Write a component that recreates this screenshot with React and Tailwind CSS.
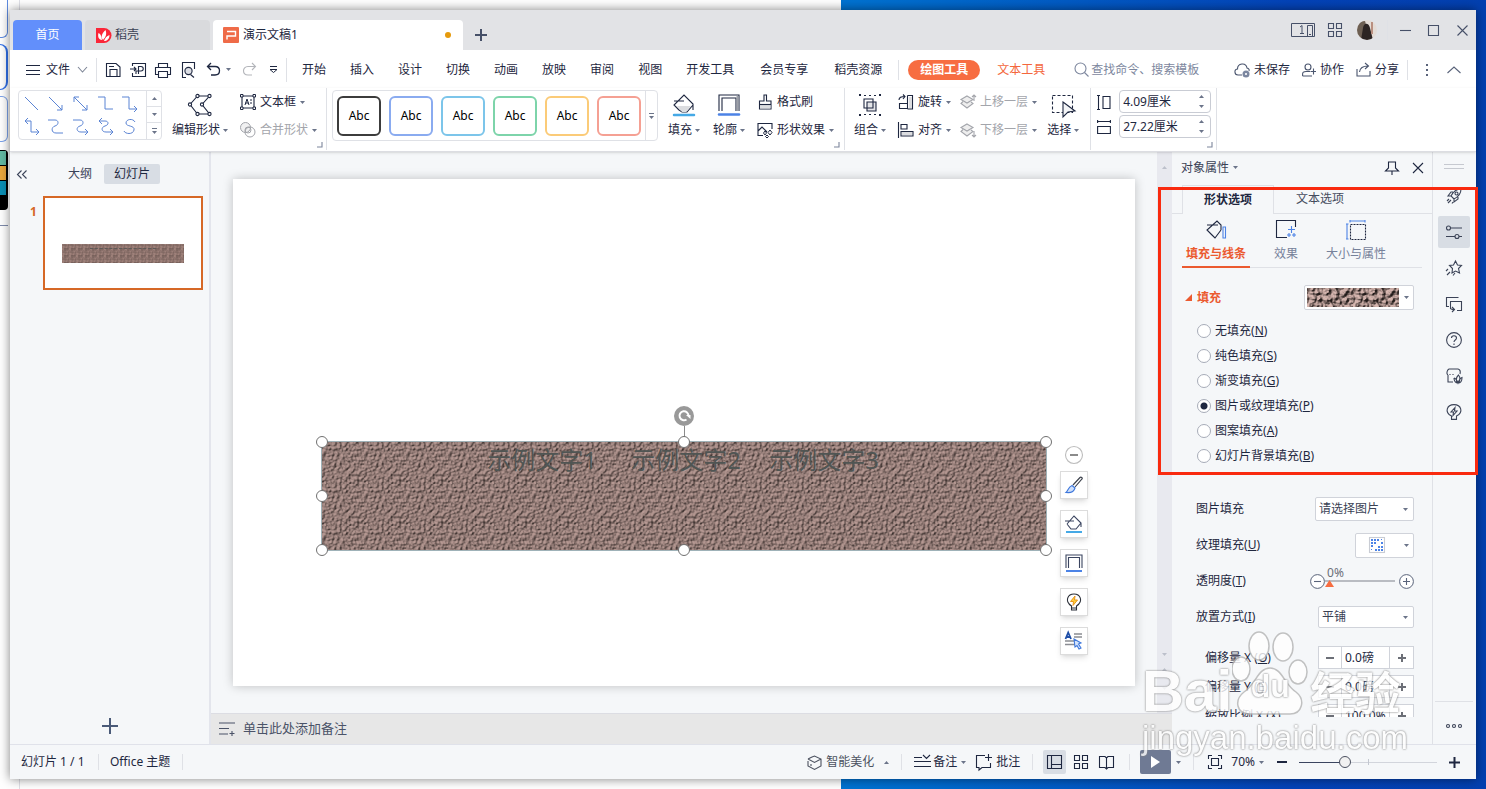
import { useState } from 'react';

const TABS = ['开始', '插入', '设计', '切换', '动画', '放映', '审阅', '视图'];
const LONG_TABS = ['开发工具', '会员专享', '稻壳资源'];

const STYLES = [
  { id: 'black', cls: 'border-[#3c3c3c]' },
  { id: 'blue', cls: 'border-[#8aabf0]' },
  { id: 'sky', cls: 'border-[#7cc5ea]' },
  { id: 'green', cls: 'border-[#7dd4aa]' },
  { id: 'yellow', cls: 'border-[#fbcb78]' },
  { id: 'red', cls: 'border-[#f5a093]' },
];

const FILLS = [
  { id: 'none', label: '无填充', keyName: 'N' },
  { id: 'solid', label: '纯色填充', keyName: 'S' },
  { id: 'gradient', label: '渐变填充', keyName: 'G' },
  { id: 'picture', label: '图片或纹理填充', keyName: 'P' },
  { id: 'pattern', label: '图案填充', keyName: 'A' },
  { id: 'slide', label: '幻灯片背景填充', keyName: 'B' },
];

const LINES = [
  'M1 1L14 14',
  'M1 1L14 14M14 9V14H9',
  'M1 1L14 14M14 9V14H9M1 6V1H6',
  'M0 1H7V13H15',
  'M0 1H7V13H15M12 10L15 13L12 16',
  'M1 2H7V13H14M12 10L15 13L12 16M4 -1L1 2L4 5',
  'M0 1H7C11 1 11 6 7 7C3 8 3 14 8 14H15',
  'M0 1H7C11 1 11 6 7 7C3 8 3 13 8 13H15M12 10L15 13L12 16',
  'M1 2H7C11 2 11 6 7 7C3 8 3 13 8 13H15M12 10L15 13L12 16M4 -1L1 2L4 5',
  'M13 3C11 -1 4 0 4 4C4 8 13 6 12 11C11 16 3 15 2 12',
];

function Icon({ w = 16, h = w, className = '', children, ...rest }) {
  return (
    <svg width={w} height={h} viewBox={`0 0 ${w} ${h}`} fill="none" stroke="currentColor" strokeWidth="1.1" aria-hidden="true" className={`shrink-0 overflow-visible ${className}`} {...rest}>
      {children}
    </svg>
  );
}

function Caret({ up = false, className = '' }) {
  return (
    <svg width="5" height="3" viewBox="0 0 5 3" aria-hidden="true" className={`shrink-0 text-[#6b7489] ${className}`}>
      <path d={up ? 'M0 3L2.5 0L5 3Z' : 'M0 0L2.5 3L5 0Z'} fill="currentColor" />
    </svg>
  );
}

function Divider({ className = '' }) {
  return <span className={`w-px shrink-0 bg-[#dfe1e6] ${className}`} />;
}

// Tiled stone texture, shared by the shape, its thumbnail and the fill preview
function Texture({ id, scale = 2, freq = 0.35, tile = 42, light = '#c9aba5' }) {
  return (
    <svg className="block h-full w-full" aria-hidden="true">
      <filter id={id} x="0" y="0" width="100%" height="100%" colorInterpolationFilters="sRGB">
        <feTurbulence type="fractalNoise" baseFrequency={freq} numOctaves="4" seed="11" stitchTiles="stitch" x="0" y="0" width={tile} height={tile} result="noise" />
        <feDiffuseLighting in="noise" surfaceScale={scale} diffuseConstant="1" lightingColor={light} x="0" y="0" width={tile} height={tile} result="lit">
          <feDistantLight azimuth="225" elevation="48" />
        </feDiffuseLighting>
        <feTile in="lit" />
      </filter>
      <rect width="100%" height="100%" fill="#93766f" />
      <rect width="100%" height="100%" opacity="0.75" filter={`url(#${id})`} />
    </svg>
  );
}

function BucketIcon() {
  return (
    <Icon w={22} h={22}>
      <path d="M6 16L1 11L11 1L20 10V16M6 16L9 18H14L20 11M1 7H11" />
      <path d="M4 12H18L13 18H9Z" fill="#dcdde0" stroke="none" />
      <path d="M1 21H21" stroke="#45a9e6" strokeWidth="2.5" strokeLinecap="round" />
    </Icon>
  );
}

function OutlineIcon() {
  return (
    <Icon w={22} h={22}>
      <path d="M1 17V1H21V17M4 17V4H18V17" />
      <path d="M19.5 2V17" stroke="#9da0a8" strokeWidth="2" />
      <path d="M1 20.5H21" stroke="#4c83e6" strokeWidth="2.5" strokeLinecap="round" />
    </Icon>
  );
}

function LayersIcon({ up }) {
  return (
    <Icon>
      <path d="M7 2L13 5.5L7 9L1 5.5ZM3 7.5L1 9.5L7 14L13 9.5L11 8" fill="#eee" />
      <path d={up ? 'M14 7V1M12 3L14 1L16 3' : 'M14 9V15M12 13L14 15L16 13'} />
    </Icon>
  );
}

function BigButton({ icon, label, className = '' }) {
  return (
    <button type="button" className={`mt-1 flex flex-col ${className}`}>
      <span className="flex h-[26px] items-center pl-[5px]">{icon}</span>
      <span className="flex h-6 items-center gap-[3px]">{label}<Caret /></span>
    </button>
  );
}

function SmallButton({ icon, label, caret = true, disabled = false }) {
  return (
    <button type="button" disabled={disabled} className="flex h-7 items-center gap-1 text-[#1e2740] disabled:text-[#a3a5ab]">
      {icon}
      <span>{label}</span>
      {caret && <Caret />}
    </button>
  );
}

function Launcher() {
  return (
    <button type="button" aria-label="更多设置" className="self-end pb-1">
      <Icon w={5} className="text-[#7d869c]"><path d="M5 0V5H0" /></Icon>
    </button>
  );
}

function SizeInput({ label, value, icon }) {
  return (
    <label className="flex items-center gap-2">
      {icon}
      <span className="flex h-[23px] w-[92px] items-center rounded-sm border border-[#c9ccd4] bg-white pr-1.5">
        <input aria-label={label} defaultValue={value} className="w-full min-w-0 bg-transparent pl-[3px] outline-none" />
        <span className="flex flex-col gap-[7px]"><Caret up /><Caret /></span>
      </span>
    </label>
  );
}

function TitleBar() {
  return (
    <header className="flex h-10 shrink-0 items-center bg-[#e2e3e6] pl-[3px] text-[#465068]">
      <div className="flex items-center gap-[3px] self-end">
        <button type="button" className="h-[30px] w-[69px] rounded-t-sm bg-[#628ffb] text-white">首页</button>
        <button type="button" className="flex h-[30px] w-[125px] items-center gap-1 rounded-t-sm bg-[#d9dadd] pl-[11px] text-[#3a4154]">
          <Icon w={15} stroke="none">
            <path d="M0 0H8A7.5 7.5 0 0 1 8 15H0Z" fill="#fb2638" />
            <path d="M7 12C4.500 9 6 5 9.500 2C11 6 10 9 7 12ZM6 12C2.500 12 1.500 8 2.500 5C5 6 5.500 9 6 12ZM8 13C9 10 10.500 8 13.500 7C13.500 11 11 13 8 13Z" fill="#fff" />
          </Icon>
          稻壳
        </button>
        <button type="button" className="flex h-[30px] w-[250px] items-center gap-1 rounded-t-sm bg-white pl-2.5 pr-3 text-[#1e2740]">
          <Icon stroke="none">
            <rect width="16" height="16" rx="1" fill="#ef6b48" />
            <path d="M4 4.5H12.5V9H4V12.5" stroke="#fff" strokeWidth="1.4" />
          </Icon>
          演示文稿1
          <span className="ml-auto size-1.5 rounded-full bg-[#e69a0c]" />
        </button>
      </div>
      <button type="button" aria-label="新建标签" className="mt-2.5 ml-3">
        <Icon w={12} strokeWidth="2"><path d="M6 0V12M0 6H12" /></Icon>
      </button>
      <div className="ml-auto flex items-center">
        <Icon w={24} h={15} strokeWidth="1"><path d="M.5 .5H23.5V13.5H.5ZM16.5 2.5H21.5V13M16.5 2.5V13.5M9 4L11 2.5V10.5M9 10.5H13M18 11.5H20" /></Icon>
        <Icon w={14} className="ml-[13px]"><path d="M.5 .5H5.500V5.500H.5ZM8.500 .5H13.500V5.500H8.500ZM.5 8.500H5.500V13.500H.5ZM8.500 8.500H13.500V13.500H8.500Z" /></Icon>
        <svg width="20" height="20" viewBox="0 0 20 20" className="ml-[15px] rounded-full" aria-hidden="true">
          <rect width="20" height="20" fill="#e4dcd6" />
          <path d="M0 2L8 1L10 8L5 19H0Z" fill="#6d5f52" />
          <path d="M6 8C7 2 12 3 13 8L16 20H4Z" fill="#2c2422" />
          <path d="M14 2H16V14H14Z" fill="#b98f80" />
        </svg>
        <Divider className="ml-2.5 h-5 bg-[#c4c6cc]" />
        <button type="button" aria-label="最小化" className="ml-3"><Icon w={11}><path d="M0 5.5H11" /></Icon></button>
        <button type="button" aria-label="最大化" className="ml-[17px]"><Icon w={11}><path d="M.5 .5H10.5V10.5H.5Z" /></Icon></button>
        <button type="button" aria-label="关闭" className="mr-2 ml-[18px]"><Icon w={11}><path d="M.5 .5L10.5 10.5M10.5 .5L.5 10.5" /></Icon></button>
      </div>
    </header>
  );
}

function MenuBar() {
  return (
    <nav className="flex h-[38px] shrink-0 items-center bg-white pt-px pl-4 text-[#1e2740]">
      <button type="button" className="flex items-center">
        <Icon w={14} h={10} strokeWidth="1"><path d="M0 .5H14M0 5.5H14M0 9.5H14" /></Icon>
        <span className="ml-1.5">文件</span>
        <Icon w={9} h={5} className="ml-2 text-[#7d8596]"><path d="M0 0L4.5 5L9 0" /></Icon>
      </button>
      <Divider className="ml-[9px] h-6" />
      <div className="ml-2 flex items-center gap-[9px]">
        <button type="button" aria-label="保存"><Icon><path d="M1.5 1.5H11L15 5V14.5H1.500ZM5 14.5V7.5H12V14.5M4 4.5H9" /></Icon></button>
        <button type="button" aria-label="输出为PDF"><Icon><path d="M2.5 4V1.5H15.5V14.5H2.5V11M0 7H6M4 5L6 7L4 9M8.500 12V4.500H11C14 4.500 14 9 11 9H6V12" /></Icon></button>
        <button type="button" aria-label="打印"><Icon><path d="M3.5 5.500V1.5H12.5V5.500M3.5 12.5H.5V5.5H15.5V12.5H12.5M3.5 9.5H12.5V15.5H3.5Z" /></Icon></button>
        <button type="button" aria-label="打印预览"><Icon><path d="M6 15.5H2.5V.5H14.500V7M10.5 12.5L14 15.5" /><circle cx="8.5" cy="9" r="3.6" fill="#dcdee4" /></Icon></button>
      </div>
      <button type="button" aria-label="撤销" className="ml-2.5"><Icon strokeWidth="1.300"><path d="M5 1L1.5 4.5L5 8M2 4.5H9C15 4.5 15 13 9 13H5" /></Icon></button>
      <Caret className="ml-1" />
      <button type="button" aria-label="恢复" className="ml-2.5 text-[#b3b5ba]"><Icon><path d="M11 1L14.5 4.5L11 8M14 4.5H7C1 4.5 1 13 7 13H11" /></Icon></button>
      <button type="button" aria-label="自定义工具栏" className="ml-3"><Icon w={9} h={7} strokeWidth="1"><path d="M1 .5H8M1 3.500H8L4.500 6.500Z" /></Icon></button>
      <Divider className="ml-2 h-6" />
      <div className="ml-[15px] flex gap-6">
        {TABS.map((t) => <button type="button" key={t}>{t}</button>)}
        <div className="flex gap-[26px]">
          {LONG_TABS.map((t) => <button type="button" key={t}>{t}</button>)}
        </div>
      </div>
      <Divider className="ml-4 h-5" />
      <button type="button" className="ml-[9px] h-5 rounded-full bg-[#f76d41] px-3 font-bold text-white">绘图工具</button>
      <button type="button" className="ml-[17px] text-[#f4673c]">文本工具</button>
      <label className="ml-[29px] flex items-center gap-0.5 text-[#7d879e]">
        <Icon w={15}><circle cx="6.5" cy="6.5" r="5.5" /><path d="M10.5 10.5L14.5 14.5" /></Icon>
        <input aria-label="查找" placeholder="查找命令、搜索模板" className="w-[116px] outline-none placeholder:text-[#7d879e]" />
      </label>
      <div className="ml-auto flex items-center">
        <button type="button" className="flex items-center gap-1">
          <Icon className="text-[#4a556e]"><path d="M8 13H4C0 13 0 7 3.5 7C3.5 1 12 0 13 6C15 6.5 15.5 8 15 9" /><circle cx="12" cy="12" r="3.500" fill="#7c87a0" stroke="none" /><path d="M11 11L13 13M13 11L11 13" stroke="#fff" strokeWidth=".8" /></Icon>
          未保存
        </button>
        <button type="button" className="ml-3 flex items-center gap-1">
          <Icon w={14} className="text-[#4a556e]"><circle cx="6" cy="4" r="3" /><path d="M.6 13V11C.6 9 2 8.5 4 8.5H8M.6 13H10M11.5 5.5V11.5M8.5 8.5H14" /></Icon>
          协作
        </button>
        <button type="button" className="ml-3 flex items-center gap-1">
          <Icon w={15} className="text-[#4a556e]"><path d="M1 7V14H14V9M3.5 10C4 6 7 4 12 4M9 1L12.5 4L9 7" /></Icon>
          分享
        </button>
        <Divider className="ml-2 h-5" />
        <button type="button" aria-label="更多" className="ml-[18px]"><Icon w={3} h={12} stroke="none"><path d="M0 0H2V2H0ZM0 5H2V7H0ZM0 10H2V12H0Z" fill="#59637a" /></Icon></button>
        <button type="button" aria-label="收起功能区" className="mr-[15px] ml-[18px]"><Icon w={14} h={7} className="text-[#59637a]"><path d="M.5 7L7 1L13.5 7" /></Icon></button>
      </div>
    </nav>
  );
}

function Ribbon() {
  return (
    <section className="z-10 flex h-16 shrink-0 border-b border-[#dcdde2] bg-white pl-2 text-[#1e2740] shadow-sm">
      <div className="mt-0.5 flex h-[50px] w-36 shrink-0 rounded-sm border border-[#dfe1e6]">
        <div className="grid flex-1 grid-cols-5 place-items-center py-px pr-1">
          {LINES.map((d) => (
            <button type="button" key={d} aria-label="线条">
              <Icon w={15} className="text-[#5b84d4]" strokeWidth="1"><path d={d} /></Icon>
            </button>
          ))}
        </div>
        <div className="grid w-[15px] grid-rows-3 place-items-center divide-y divide-[#dfe1e6] border-l border-[#dfe1e6]">
          <button type="button" aria-label="上一行" className="flex h-full w-full items-center justify-center"><Caret up /></button>
          <button type="button" aria-label="下一行" className="flex h-full w-full items-center justify-center"><Caret /></button>
          <button type="button" aria-label="其他形状" className="flex h-full w-full flex-col items-center justify-center gap-0.5"><span className="h-px w-[5px] bg-[#6b7489]" /><Caret /></button>
        </div>
      </div>
      <BigButton
        className="ml-2.5"
        label="编辑形状"
        icon={(
          <span className="pl-[11px]">
            <Icon w={24} h={22}>
              <path d="M9.5 2H21.5L14 10.5L21.5 20H9.5L2 10.5Z" />
              <g fill="#fff"><circle cx="9.5" cy="2" r="1.6" /><circle cx="21.5" cy="2" r="1.6" /><circle cx="14" cy="10.5" r="1.6" /><circle cx="21.5" cy="20" r="1.6" /><circle cx="9.5" cy="20" r="1.6" /><circle cx="2" cy="10.5" r="1.6" /></g>
            </Icon>
          </span>
        )}
      />
      <div className="ml-3 flex flex-col">
        <SmallButton label="文本框" icon={<Icon><path d="M2 2H14V14H2Z" /><path d="M5 11L7 5L9 11M5.5 9H8.5M10 6H12M10 9H12" strokeWidth="1" /><g fill="#fff"><path d="M.5 .5H3V3H.5ZM13 .5H15.5V3H13ZM.5 13H3V15.5H.5ZM13 13H15.5V15.5H13Z" strokeWidth="1" /></g></Icon>} />
        <SmallButton disabled label="合并形状" icon={<Icon strokeWidth="1"><circle cx="5.5" cy="5.5" r="5" fill="#f1f1f2" /><circle cx="10" cy="10" r="5" /><circle cx="8" cy="8" r="3" /></Icon>} />
      </div>
      <Launcher />
      <Divider className="ml-1 h-[62px]" />
      <div className="mt-0.5 ml-[5px] flex h-[51px] shrink-0 items-center rounded-sm border border-[#dfe1e6]">
        <div className="flex gap-2 px-1">
          {STYLES.map((s) => (
            <button type="button" key={s.id} className={`h-10 w-11 rounded-md border-2 text-black ${s.cls}`}>Abc</button>
          ))}
        </div>
        <button type="button" aria-label="更多样式" className="flex h-full w-3 flex-col items-center justify-center gap-0.5 border-l border-[#dfe1e6]"><span className="h-px w-[5px] bg-[#6b7489]" /><Caret /></button>
      </div>
      <BigButton className="ml-2.5" label="填充" icon={<BucketIcon />} />
      <BigButton className="ml-[13px]" label="轮廓" icon={<OutlineIcon />} />
      <div className="ml-3 flex flex-col">
        <SmallButton caret={false} label="格式刷" icon={<Icon><path d="M7 1H9.5V7H14V15H2.5V7H7Z" /><path d="M3 11H13.5V14.5H3Z" fill="#dcdde0" stroke="none" /><path d="M2.5 10.5H14" /></Icon>} />
        <SmallButton label="形状效果" icon={<Icon><path d="M6 13.5H1V1.5H15V7M1 9L5 5L10 10" /><path d="M8 9L9.500 11L8 13L6.500 11ZM13 8L15 10.5L13 13L11 10.5ZM10 13L11.500 14.5L10 16L8.500 14.5Z" strokeWidth="1" /></Icon>} />
      </div>
      <Launcher />
      <Divider className="ml-[5px] h-[62px]" />
      <BigButton
        className="ml-[9px]"
        label="组合"
        icon={(
          <Icon w={22} h={22}>
            <path d="M8 8H17V17H8Z" fill="#e4e5e8" />
            <path d="M5 5H14V14H5Z" />
            <path d="M5 1.500H7M10 1.500H12M15 1.500H17M5 20.500H7M10 20.500H12M15 20.500H17" strokeWidth="1" />
            <path d="M0 0H2V2H0ZM20 0H22V2H20ZM0 20H2V22H0ZM20 20H22V22H20Z" fill="currentColor" stroke="none" />
          </Icon>
        )}
      />
      <div className="ml-3 flex flex-col">
        <SmallButton label="旋转" icon={<Icon><path d="M9.5 1.5H14.5V15H9.500M9.500 1.500V15M9.5 9.5H1.5V14.500H9.5M1 6C1 3 3 2.5 7 2.5M5 .5L7 2.5L5 5" /><path d="M11 3H14V14H11Z" fill="#dcdde0" stroke="none" /></Icon>} />
        <SmallButton label="对齐" icon={<Icon><path d="M.5 0V16M3 2.5H9V7H3ZM3 9.5H15V14H3Z" /><path d="M4 10H14V13H4Z" fill="#dcdde0" stroke="none" /></Icon>} />
      </div>
      <div className="ml-[9px] flex flex-col">
        <SmallButton disabled label="上移一层" icon={<LayersIcon up />} />
        <SmallButton disabled label="下移一层" icon={<LayersIcon />} />
      </div>
      <BigButton
        className="ml-2.5"
        label="选择"
        icon={<Icon w={24} h={22}><path d="M.5 1.5H20.500V18.500H.5Z" strokeDasharray="3 2" /><path d="M11 8L23 17L16 18L11 23Z" fill="#f3f4f6" /></Icon>}
      />
      <Divider className="ml-[11px] h-[62px]" />
      <div className="mt-0.5 ml-1.5 flex flex-col gap-0.5">
        <SizeInput label="高度" value="4.09厘米" icon={<Icon w={14}><path d="M1.5 1V14M0 .5H3M0 14.500H3M6 1.5H13V13.5H6Z" /></Icon>} />
        <SizeInput label="宽度" value="27.22厘米" icon={<Icon w={14}><path d="M0 1.500H14M.6 0V3M13.4 0V3M.6 6.5H13.4V13.5H.6Z" /></Icon>} />
      </div>
      <div className="-ml-1 flex"><Launcher /></div>
      <Divider className="ml-1 h-[62px]" />
    </section>
  );
}

function SlideList() {
  return (
    <aside className="flex w-[201px] shrink-0 flex-col border-r-2 border-[#e3e5ec]">
      <div className="mt-3 flex h-5 items-center pl-[7px] text-[#3a4358]">
        <button type="button" aria-label="收起"><Icon w={10} h={9}><path d="M4.5 .5L.5 4.5L4.5 8.5M9.5 .5L5.5 4.5L9.5 8.5" /></Icon></button>
        <button type="button" className="ml-[29px] px-3">大纲</button>
        <button type="button" className="h-5 w-14 rounded-xs bg-[#d8dde4] text-[#1e2740]">幻灯片</button>
      </div>
      <div className="mt-3 flex pl-5">
        <span className="w-[13px] pt-2 font-bold text-[#d66826]">1</span>
        <button type="button" aria-label="幻灯片 1" className="flex h-[94px] w-40 border-2 border-[#d66826] bg-white pt-[46px] pl-[17px]">
          <span className="relative h-[19px] w-[122px] overflow-hidden">
            <Texture id="tex-thumb" freq={0.5} scale={1} tile={7} light="#b9978f" />
            <span className="absolute inset-x-7 top-1 h-px border-t border-dashed border-[#5d5a58]" />
          </span>
        </button>
      </div>
      <button type="button" aria-label="新建幻灯片" className="mt-auto mb-2.5 self-center text-[#4a5a78]">
        <Icon w={16} strokeWidth="2"><path d="M8 0V16M0 8H16" /></Icon>
      </button>
    </aside>
  );
}

const HANDLES = [
  'left-0 top-0', 'left-1/2 top-0', 'left-full top-0',
  'left-0 top-1/2', 'left-full top-1/2',
  'left-0 top-full', 'left-1/2 top-full', 'left-full top-full',
];

const FLOAT_TOOLS = [
  { id: '格式刷', icon: <Icon w={18}><path d="M8 9L15 1.5C16 .5 18 2 17 3L10 11" stroke="#3a3f4a" /><path d="M7 9.5L10 12C9 16 5 17 1 16.5C3 15 3 11 7 9.5Z" fill="#cfe0fb" stroke="#3f78dc" /></Icon> },
  { id: '填充', icon: <Icon w={18}><path d="M2 9L9 1L16 8V12M2 9L6 14H11L16 8M0 6H9" /><path d="M1 17H17" stroke="#45a9e6" strokeWidth="2" /></Icon> },
  { id: '轮廓', icon: <Icon w={18}><path d="M1 14V1H17V14M3.5 14V3.5H14.5V14" /><path d="M1 17H17" stroke="#4c83e6" strokeWidth="2" /></Icon> },
  { id: '智能', icon: <Icon w={18}><path d="M6.5 13C-1 8 3 1 9 1S19 8 11.5 13V17H6.5ZM6.5 15H11.5" stroke="#2b2f38" /><path d="M10 3L5.5 8.5H8.5L8 12.5L12.5 7H9.5Z" fill="#ffd23c" stroke="#e8951c" strokeWidth="1" /></Icon> },
  { id: '文本', icon: <Icon w={18}><path d="M9 2H17M9 5H17M0 9H11M0 12.5H10" stroke="#8a8d93" strokeWidth="1.5" /><path d="M.5 7L3.2 .5L6 7M1.5 5H5" stroke="#1f4fa8" strokeWidth="1.8" /><path d="M9 7L16 11L13.5 12L16 16L14 17L12 13.5L10 15Z" fill="#d6e5fc" stroke="#3f78dc" /></Icon> },
];

function Canvas() {
  return (
    <main className="mx-[22px] my-[27px] flex-1 bg-white shadow-[0_0_10px_rgba(0,0,0,0.22)]">
      <div className="relative h-full">
        <div className="absolute top-[262px] left-[88px] h-[110px] w-[726px] border border-[#9fb2b8]">
          <Texture id="tex-shape" />
          <p className="absolute inset-x-0 top-0 flex h-9 items-center pl-[165px] text-2xl text-[#505553]">
            <span className="w-36">示例文字1</span>
            <span className="w-[138px]">示例文字2</span>
            <span>示例文字3</span>
          </p>
          <span className="absolute -top-4 left-1/2 h-4 w-px bg-[#8b8b8b]" />
          <span className="absolute -top-9 left-1/2 flex size-5 -translate-x-1/2 items-center justify-center rounded-full bg-[#999]">
            <Icon w={12} className="text-white" strokeWidth="2"><path d="M8.5 9.5A4.5 4.5 0 1 1 10.5 6" /><path d="M8 5H12.5V9Z" fill="#fff" stroke="none" /></Icon>
          </span>
          {HANDLES.map((pos) => (
            <span key={pos} className={`absolute size-3 -translate-1/2 rounded-full border border-[#707070] bg-white ${pos}`} />
          ))}
        </div>
        <div className="absolute top-[267px] left-[827px] flex w-7 flex-col items-center gap-[11px]">
          <button type="button" aria-label="收起工具" className="-mb-1 text-[#8b8b8b]"><Icon w={18}><circle cx="9" cy="9" r="8.5" stroke="#bdbdbd" /><path d="M5 9H13" strokeWidth="2" /></Icon></button>
          {FLOAT_TOOLS.map((t) => (
            <button type="button" key={t.id} aria-label={t.id} className="flex size-7 items-center justify-center border border-[#dcdcdc] bg-white text-[#3b4560] shadow-md">
              {t.icon}
            </button>
          ))}
        </div>
      </div>
    </main>
  );
}

function Workspace() {
  return (
    <div className="flex min-w-0 flex-1 flex-col">
      <div className="flex min-h-0 flex-1">
        <Canvas />
        <div className="flex w-[15px] flex-col items-center bg-[#e8e9ef] pt-3.5 pb-[7px]">
          <Caret up className="text-[#bcc0cb]" />
          <Caret className="mt-auto mb-3 text-[#bcc0cb]" />
          <Caret up className="mb-4 text-[#bcc0cb]" />
          <Caret className="mb-4 text-[#bcc0cb]" />
        </div>
      </div>
      <label className="flex h-[31px] shrink-0 items-center gap-2 border-t border-[#dcdde3] bg-[#e7e7e7] pl-2 text-[13px] text-[#4b5368]">
        <Icon w={16} h={14}><path d="M0 1H16M0 6.5H10M0 12H9M13 9V14M10.5 11.5H15.5" /></Icon>
        <input aria-label="备注" placeholder="单击此处添加备注" className="flex-1 outline-none placeholder:text-[#4b5368]" />
      </label>
    </div>
  );
}

function Row({ id, label, keyName, children }) {
  return (
    <div className="flex h-9 items-center justify-between pr-[18px] pl-6">
      <label htmlFor={id}>{label}{keyName && <>(<u>{keyName}</u>)</>}</label>
      {children}
    </div>
  );
}

function Select({ id, className, options }) {
  return (
    <span className="relative flex items-center">
      <select id={id} className={`appearance-none rounded-xs border border-[#d0d3da] bg-white pl-[3px] text-[#3a4154] ${className}`}>
        {options.map((o) => <option key={o}>{o}</option>)}
      </select>
      <Caret className="pointer-events-none absolute right-1.5" />
    </span>
  );
}

function Stepper({ id, label, keyName, value }) {
  return (
    <div className="flex h-[29px] shrink-0 items-center justify-between pr-[18px] pl-[33px]">
      <label htmlFor={id}>{label} (<u>{keyName}</u>)</label>
      <span className="flex h-[23px] w-24 divide-x divide-[#d0d3da] border border-[#d0d3da] bg-white text-[#6c6f77]">
        <button type="button" aria-label="减少" className="flex w-[23px] items-center justify-center"><Icon w={8} strokeWidth="2"><path d="M0 4H8" /></Icon></button>
        <input id={id} defaultValue={value} className="w-0 flex-1 pl-[3px] text-[#1e2740] outline-none" />
        <button type="button" aria-label="增加" className="flex w-[23px] items-center justify-center"><Icon w={8} strokeWidth="2"><path d="M0 4H8M4 0V8" /></Icon></button>
      </span>
    </div>
  );
}

function Properties() {
  const [fill, setFill] = useState('picture');
  const [opacity, setOpacity] = useState(0);

  return (
    <aside className="flex w-[260px] shrink-0 flex-col overflow-hidden pb-[27px] text-[#1e2740]">
      <div className="flex min-h-0 flex-1 flex-col overflow-hidden">
        <div className="flex h-[33px] shrink-0 items-center pr-[9px] pb-0.5 pl-[9px]">
          <button type="button" className="flex items-center gap-1 text-[#3a4154]">对象属性<Caret /></button>
          <button type="button" aria-label="固定" className="ml-auto"><Icon w={14}><path d="M3.5 1H10.5V7L13.5 10H.5L3.5 7ZM7 10V14" /></Icon></button>
          <button type="button" aria-label="关闭面板" className="ml-3.5"><Icon w={10}><path d="M0 0L10 10M10 0L0 10" /></Icon></button>
        </div>
        <div className="flex h-[29px] shrink-0 text-[#454c5e]">
          <span className="w-2.5 border-b border-[#dfe1e6]" />
          <button type="button" className="w-[92px] border-x border-t border-[#dfe1e6] font-bold text-[#1e2740]">形状选项</button>
          <button type="button" className="flex-1 border-b border-[#dfe1e6] pl-[22px] text-left">文本选项</button>
        </div>
        <div className="mx-2.5 flex h-[54px] shrink-0 border-b border-[#dfe1e6] text-[#76819a]">
          <button type="button" className="-mb-px flex w-[68px] flex-col items-center border-b-2 border-[#eb5a30] font-bold text-[#eb5a30]">
            <span className="flex h-8 items-center text-[#1e2740]"><Icon w={20}><path d="M6 15L1 10L11 1L15 5V10M6 15L9 18L15 10M1 5H12" /><path d="M17 7H19.5V18H17Z" stroke="#4c83e6" /></Icon></span>
            填充与线条
          </button>
          <button type="button" className="flex w-[72px] flex-col items-center">
            <span className="flex h-8 items-center"><Icon w={20}><path d="M11 17.5H.5V.5H19.5V7" stroke="#1e2740" /><path d="M15.500 6V13M12 9.5H19M13 13V17M11 15H15M18 13V17M16 15H20" stroke="#4c83e6" /></Icon></span>
            效果
          </button>
          <button type="button" className="flex w-[68px] flex-col items-center">
            <span className="flex h-8 items-center"><Icon w={20}><path d="M4.5 4.5H19.5V19.5H4.5Z" stroke="#1e2740" strokeDasharray="2 1" /><path d="M4 1H19M4 0V2.5M19 0V2.5M1 4V19M0 4H2.5M0 19H2.5" stroke="#4c83e6" /></Icon></span>
            <span className="whitespace-nowrap">大小与属性</span>
          </button>
        </div>
        <div className="mt-[17px] flex h-[25px] shrink-0 items-center pr-[18px] pl-[13px]">
          <Icon w={7} className="text-[#eb5a30]" stroke="none"><path d="M7 0V7H0Z" fill="currentColor" /></Icon>
          <h3 className="ml-[5px] font-bold text-[#eb5a30]">填充</h3>
          <button type="button" aria-label="填充预览" className="ml-auto flex h-[25px] w-[110px] items-center justify-between rounded-xs border border-[#d0d3da] bg-white pr-1 pl-0.5">
            <span className="h-[19px] w-[92px]"><Texture id="tex-preview" freq={0.22} scale={5} tile={46} light="#f0cfc8" /></span>
            <Caret />
          </button>
        </div>
        <fieldset aria-label="填充" className="mt-2 shrink-0 pl-[25px]">
          {FILLS.map((f) => (
            <label key={f.id} className="flex h-[25px] items-center gap-1">
              <input
                type="radio"
                name="fill"
                checked={fill === f.id}
                onChange={() => setFill(f.id)}
                className="size-3.5 appearance-none rounded-full border border-[#a7acb8] bg-white checked:bg-[radial-gradient(#1e2740_3px,#ffffff_4px)]"
              />
              <span>{f.label}(<u>{f.keyName}</u>)</span>
            </label>
          ))}
        </fieldset>
        <div className="mt-[23px] shrink-0">
          <Row id="pic" label="图片填充"><Select id="pic" className="h-6 w-[99px]" options={['请选择图片', '本地文件']} /></Row>
          <Row id="tex" label="纹理填充" keyName="U">
            <button type="button" id="tex" className="flex h-[25px] w-[59px] items-center justify-between rounded-xs border border-[#d0d3da] bg-white pr-1 pl-[13px]">
              <Icon w={16} stroke="none">
                <rect x=".5" y=".5" width="15" height="15" stroke="#c9ccd4" />
                <path d="M2 2H4V4H2ZM5 2H7V4H5ZM8 2H10V4H8ZM12 2H13V3H12ZM2 5H4V7H2ZM5 5H7V7H5ZM2 8H4V10H2ZM12 5H14V7H12ZM9 9H11V11H9ZM12 9H14V11H12ZM2 12H3V13H2ZM6 12H8V14H6ZM9 12H11V14H9ZM12 12H14V14H12Z" fill="#4c83e6" />
              </Icon>
              <Caret />
            </button>
          </Row>
          <Row id="alpha" label="透明度" keyName="T">
            <span className="relative flex items-center text-[#59637a]">
              <button type="button" aria-label="降低" onClick={() => setOpacity(Math.max(0, opacity - 1))}><Icon w={15}><circle cx="7.5" cy="7.5" r="6.9" fill="#fff" strokeWidth="1" /><path d="M4 7.5H11" /></Icon></button>
              <input
                id="alpha"
                type="range"
                value={opacity}
                onChange={(e) => setOpacity(Number(e.target.value))}
                className="mr-1 h-4 w-[70px] appearance-none bg-[linear-gradient(#b9bcc2,#b9bcc2)] bg-[length:100%_2px] bg-center bg-no-repeat [&::-webkit-slider-thumb]:mt-[5px] [&::-webkit-slider-thumb]:h-[7px] [&::-webkit-slider-thumb]:w-[9px] [&::-webkit-slider-thumb]:appearance-none [&::-webkit-slider-thumb]:bg-[#f76d41] [&::-webkit-slider-thumb]:[clip-path:polygon(50%_0,100%_100%,0_100%)]"
              />
              <button type="button" aria-label="提高" onClick={() => setOpacity(Math.min(100, opacity + 1))}><Icon w={15}><circle cx="7.5" cy="7.5" r="6.9" fill="#fff" strokeWidth="1" /><path d="M4 7.5H11M7.5 4V11" /></Icon></button>
              <output htmlFor="alpha" className="absolute -top-2 left-[17px] text-[#6b6f78]">{opacity}%</output>
            </span>
          </Row>
          <Row id="place" label="放置方式" keyName="I"><Select id="place" className="h-[22px] w-24" options={['平铺', '拉伸']} /></Row>
        </div>
        <div className="mt-2 flex flex-col">
          <Stepper id="ox" label="偏移量 X" keyName="O" value="0.0磅" />
          <Stepper id="oy" label="偏移量 Y" keyName="E" value="0.0磅" />
          <Stepper id="sx" label="缩放比例 X" keyName="X" value="100.0%" />
        </div>
      </div>
    </aside>
  );
}

const SIDE = [
  { id: '快捷', d: 'M5 8C7 4 10 1 15 1C15 6 12 9 8 11ZM5 8H2L5 4H7M8 11V14L12 11V9M3 11L1 13M5 12L2 15M7 14L6 15.5M9 5.500A1.500 1.500 0 1 1 12 5.500A1.500 1.500 0 1 1 9 5.500' },
  { id: '属性', d: 'M5 4H16M2.5 2A2 2 0 1 1 2.5 6A2 2 0 1 1 2.5 2M0 12.5H9M13 12.5H16M11 10.5A2 2 0 1 1 11 14.5A2 2 0 1 1 11 10.5' },
  { id: '动画', d: 'M9.5 1L11.5 5L15.5 5.5L12.5 8.5L13.5 13L9.5 11L6 13L6.5 8.5L3.5 5.5L7.5 5ZM2 9L0 11M4 12L1 15M9 13L7 15.5' },
  { id: '切换', d: 'M3 10.5H.5V1.5H12.5M4.500 13V5.5H15.500V14.5H11M4.500 5.500V12C4.500 13 5 13.500 8 13.500M6 11L8.5 13.5L6 16' },
  { id: '帮助', d: 'M8 .6A7.4 7.4 0 1 1 8 15.4A7.4 7.4 0 1 1 8 .6M5.5 6C5.5 3 10.5 3 10.5 6C10.5 8 8 8 8 10M8 11.5V13' },
  { id: '资源', d: 'M2 7V14H7M2 7C0 6 1 2 3 1H12C14 1.500 14.500 4 14 6M4 6V7M7 6V7M12 15C9.500 13 10 9.500 12.5 7C14.5 9.500 14.500 13 12 15ZM8 10C8 13 9.500 15 12 15C15 15 16 12 16 9.500C14.500 10 13 12 12 15C11 12 10 10.500 8 10' },
  { id: '灵感', d: 'M5.500 12C-2 8 1 .6 8 .6S18 8 10.500 12V15.4H5.500ZM9 3.5L5 8H7.5L7 11.5L11 7H8.5Z' },
];

function SideBar() {
  return (
    <aside className="flex w-11 shrink-0 flex-col items-center border-l border-[#dfe1e6] pr-0.5 text-[#3b4357]">
      <span className="mt-3 h-[5px] w-5 shrink-0 border-y border-[#c6c9d0]" />
      <div className="mt-[11px] flex flex-col gap-1">
        {SIDE.map((s) => (
          <button type="button" key={s.id} aria-label={s.id} className={`flex size-8 items-center justify-center rounded-xs ${s.id === '属性' ? 'bg-[#d8dde4]' : ''}`}>
            <Icon><path d={s.d} /></Icon>
          </button>
        ))}
      </div>
      <button type="button" aria-label="更多面板" className="mt-auto flex h-[43px] w-[38px] items-center justify-center border-t border-[#dfe1e6] pt-1.5">
        <Icon w={16} h={4}><circle cx="2" cy="2" r="1.5" /><circle cx="8" cy="2" r="1.5" /><circle cx="14" cy="2" r="1.5" /></Icon>
      </button>
    </aside>
  );
}

function StatusBar() {
  const [zoom, setZoom] = useState(32);
  return (
    <footer className="flex h-[35px] shrink-0 items-center border-t border-[#e0e2ea] pl-[11px] text-[#1e2740]">
      <span className="w-[77px]">幻灯片 1 / 1</span>
      <Divider className="h-4" />
      <span className="ml-[11px] w-[72px]">Office 主题</span>
      <Divider className="h-4" />
      <div className="ml-auto flex items-center">
        <button type="button" className="flex items-center gap-1 text-[#4c5260]">
          <Icon w={15}><path d="M5 2L7.5 1L14 4V11L7.5 14.5L1 11V6M1 4L7.5 7.5L14 4M4 9V11M5 2L1 4" /></Icon>
          智能美化
          <Caret up className="ml-1.5" />
        </button>
        <Divider className="mx-3 h-4" />
        <button type="button" className="flex items-center gap-0.5"><Icon w={17}><path d="M0 3.500H8M0 7.5H17M0 12.500H17M9 1L12.5 4.5L16 1" /></Icon>备注<Caret className="ml-0.5" /></button>
        <button type="button" className="ml-2.5 flex items-center gap-[3px]"><Icon w={17}><path d="M9 1.500H.5V13.500H3V16L6 13.500H14.500V9M12.500 0V7M9 3.5H16" /></Icon>批注</button>
        <Divider className="mr-2.5 ml-3 h-4" />
        <button type="button" aria-label="普通视图" className="flex h-6 w-[23px] items-center justify-center rounded-xs bg-[#d8dde4]"><Icon w={15}><path d="M.5 .5H14.5V13.5H.5ZM4.5 .5V13.5M4.500 9.500H14.5" /></Icon></button>
        <button type="button" aria-label="浏览视图" className="ml-2"><Icon w={14}><path d="M.5 .5H5.500V5.500H.5ZM8.500 .5H13.500V5.500H8.500ZM.5 8.500H5.500V13.500H.5ZM8.500 8.500H13.500V13.500H8.500Z" /></Icon></button>
        <button type="button" aria-label="阅读视图" className="ml-[11px]"><Icon w={15}><path d="M.5 1.5H6L7.5 3L9 1.5H14.5V12.5H9L7.5 14L6 12.5H.5ZM7.5 3V14" /></Icon></button>
        <Divider className="mr-2.5 ml-[15px] h-4" />
        <button type="button" aria-label="播放" className="flex h-6 w-[31px] items-center justify-center rounded-xs bg-[#6f7a94]"><Icon w={9} h={12} stroke="none"><path d="M0 0L9 6L0 12Z" fill="#fff" /></Icon></button>
        <Caret className="ml-[5px]" />
        <Divider className="mr-3.5 ml-3 h-4" />
        <button type="button" aria-label="适应窗口"><Icon w={14}><path d="M.5 4V.5H4M10 .5H13.5V4M13.5 10V13.5H10M4 13.5H.5V10M3.5 3.5H10.5V10.5H3.5Z" /></Icon></button>
        <button type="button" className="ml-[9px] flex items-center gap-1">70%<Caret /></button>
        <button type="button" aria-label="缩小" className="ml-[13px]" onClick={() => setZoom(zoom - 4)}><Icon w={10} strokeWidth="2"><path d="M0 5H10" /></Icon></button>
        <input
          type="range"
          aria-label="缩放"
          value={zoom}
          onChange={(e) => setZoom(Number(e.target.value))}
          className="ml-3 h-4 w-[138px] appearance-none bg-[linear-gradient(#c3c7d0,#c3c7d0),linear-gradient(to_right,#3b4560_33%,#d2d5dc_33%)] bg-[length:1px_6px,100%_1px] bg-center bg-no-repeat [&::-webkit-slider-thumb]:size-3 [&::-webkit-slider-thumb]:appearance-none [&::-webkit-slider-thumb]:rounded-full [&::-webkit-slider-thumb]:border [&::-webkit-slider-thumb]:border-[#4b5060] [&::-webkit-slider-thumb]:bg-[#f1f1f1]"
        />
        <button type="button" aria-label="放大" className="mr-4 ml-3" onClick={() => setZoom(zoom + 4)}><Icon w={11} strokeWidth="2"><path d="M0 5.5H11M5.5 0V11" /></Icon></button>
      </div>
    </footer>
  );
}

// Edge of the window underneath on the left, desktop wallpaper on the right
function Desktop() {
  return (
    <div className="absolute inset-0 flex bg-white">
      <div className="flex w-2 flex-col overflow-hidden">
        <span className="h-[38px] shrink-0 rounded-br-md border-r border-b border-[#5e8be0]" />
        <span className="mt-1.5 h-[46px] shrink-0 rounded-r-lg border-y border-r-2 border-[#2f6fe8]" />
        <span className="mt-1.5 h-[46px] shrink-0 rounded-r-md border border-l-0 border-[#7ba2ea]" />
        <span className="mt-2 flex h-[60px] shrink-0 flex-col gap-px rounded-r-sm border-y border-r-2 border-black bg-black">
          <span className="h-3.5 bg-[#63b9a2]" />
          <span className="h-3.5 bg-[#e8a63c]" />
          <span className="h-3.5 bg-[#0b8fb5]" />
        </span>
        <span className="mt-[15px] h-px shrink-0 bg-[#7f8bab]" />
      </div>
      <div className="w-3 border-r border-[#e0e1e8]" />
      <div className="ml-[821px] flex-1 bg-[linear-gradient(to_right,#0073d2,#0443b8_70%,#0340b0)]" />
    </div>
  );
}

function Watermark() {
  return (
    <div aria-hidden="true" className="pointer-events-none absolute right-[70px] bottom-[33px] z-20 w-[274px] font-['Liberation_Sans',Arial,sans-serif] font-bold whitespace-nowrap text-white opacity-80 [text-shadow:0_0_2px_#777,0_0_2px_#999]">
      <div className="flex items-end">
        <span className="text-[58px] leading-[50px]">Bai</span>
        <span className="relative flex w-[76px] justify-center">
          <svg width="76" height="86" viewBox="0 0 76 86" fill="#fff" stroke="#b4b4b4" strokeWidth="1.5">
            <ellipse cx="27" cy="16" rx="10" ry="14" />
            <ellipse cx="51" cy="17" rx="10" ry="14" />
            <ellipse cx="9" cy="39" rx="9" ry="12" />
            <ellipse cx="66" cy="42" rx="9" ry="12" />
            <path d="M38 38C50 38 52 54 64 62C74 70 70 84 58 84H18C4 84 2 70 12 62C24 54 26 38 38 38Z" />
          </svg>
          <span className="absolute bottom-2 text-[32px]">du</span>
        </span>
        <span className="ml-0.5 font-['Noto_Sans_CJK_SC',sans-serif] text-[45px] leading-[50px]">经验</span>
      </div>
      <div className="mt-1 text-[33px] leading-9 font-normal">jingyan.baidu.com</div>
    </div>
  );
}

export default function App() {
  return (
    <div className="relative flex h-screen min-h-[700px] w-full overflow-hidden p-2.5 font-['Noto_Sans','Noto_Sans_CJK_SC',sans-serif] text-xs">
      <Desktop />
      <div className="relative flex min-w-0 flex-1 flex-col bg-[#f5f7f9] shadow-[0_0_10px_rgba(0,0,0,0.5)]">
        <TitleBar />
        <MenuBar />
        <Ribbon />
        <div className="flex min-h-0 flex-1">
          <SlideList />
          <Workspace />
          <Properties />
          <SideBar />
        </div>
        <StatusBar />
      </div>
      <div className="pointer-events-none absolute top-[187px] right-2 z-30 h-72 w-80 border-3 border-[#f92a0f]" />
      <Watermark />
    </div>
  );
}
